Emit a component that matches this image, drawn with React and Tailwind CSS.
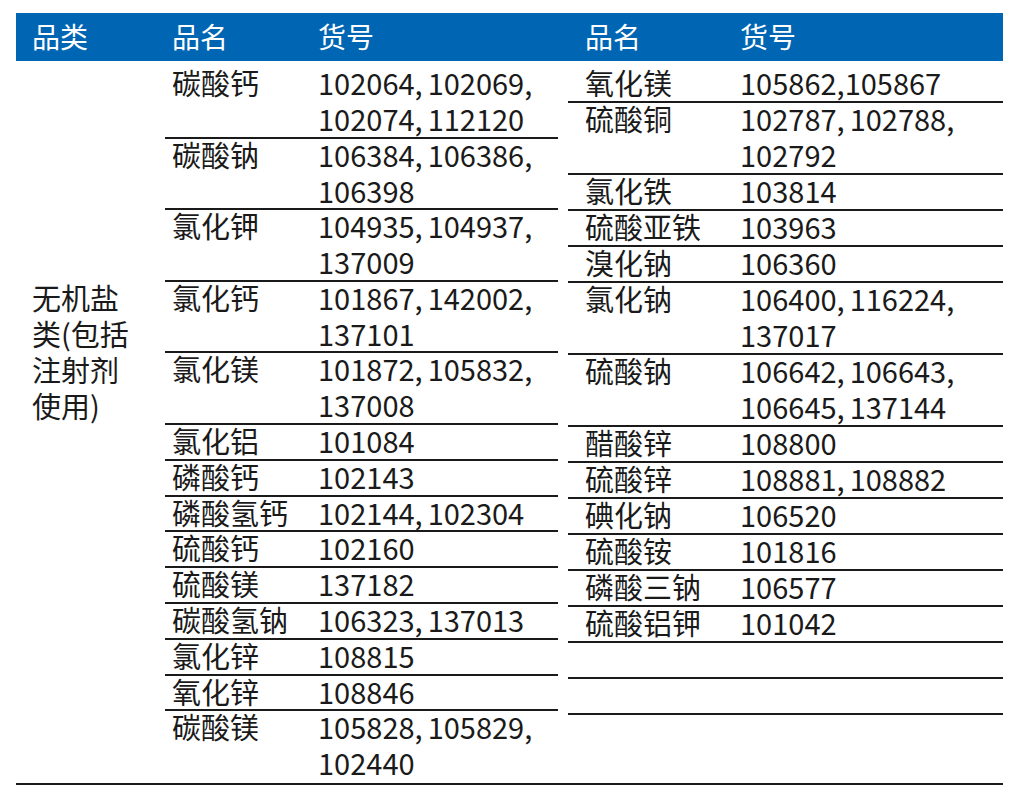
const left = [
  ['碳酸钙', ['102064,102069,', '102074,112120']],
  ['碳酸钠', ['106384,106386,', '106398']],
  ['氯化钾', ['104935,104937,', '137009']],
  ['氯化钙', ['101867,142002,', '137101']],
  ['氯化镁', ['101872,105832,', '137008']],
  ['氯化铝', ['101084']],
  ['磷酸钙', ['102143']],
  ['磷酸氢钙', ['102144,102304']],
  ['硫酸钙', ['102160']],
  ['硫酸镁', ['137182']],
  ['碳酸氢钠', ['106323,137013']],
  ['氯化锌', ['108815']],
  ['氧化锌', ['108846']],
  ['碳酸镁', ['105828,105829,', '102440']],
]

const right = [
  ['氧化镁', ['105862,105867'], true],
  ['硫酸铜', ['102787,102788,', '102792']],
  ['氯化铁', ['103814']],
  ['硫酸亚铁', ['103963']],
  ['溴化钠', ['106360']],
  ['氯化钠', ['106400,116224,', '137017']],
  ['硫酸钠', ['106642,106643,', '106645,137144']],
  ['醋酸锌', ['108800']],
  ['硫酸锌', ['108881,108882']],
  ['碘化钠', ['106520']],
  ['硫酸铵', ['101816']],
  ['磷酸三钠', ['106577']],
  ['硫酸铝钾', ['101042']],
  ['', []],
  ['', []],
]

// 逗号后留一点空隙，和原表一致
function Code({ text, narrow }) {
  if (narrow) return <div>{text}</div>
  const parts = text.split(',')
  const out = []
  parts.forEach((p, i) => {
    const comma = i < parts.length - 1
    out.push(
      <span key={i} className={`inline-block ${comma ? 'mr-[5px]' : ''}`}>
        {p + (comma ? ',' : '')}
      </span>
    )
  })
  return <div className="flex">{out}</div>
}

function Row({ name, codes, narrow, last, nameW }) {
  const tall = codes.length > 1
  return (
    <div
      className={`flex ${tall ? 'h-[72px]' : 'h-[36px]'} ${last ? '' : 'border-b-2 border-[#1a1a1a]'}`}
    >
      <div className={`${nameW} shrink-0 whitespace-nowrap`}>{name}</div>
      <div className="flex-1 flex flex-col gap-[6px] whitespace-nowrap">
        {codes.map((c, i) => <Code key={i} text={c} narrow={narrow} />)}
      </div>
    </div>
  )
}

export default function App() {
  return (
    <div
      className="min-h-screen bg-white text-[#1a1a1a] pt-[13px]"
      style={{ fontFamily: '"Noto Sans CJK SC", "Noto Sans", sans-serif' }}
    >
      <div className="ml-[16px] w-[987px]">
        {/* 表头 */}
        <div className="flex h-[48px] items-center pb-[2px] bg-[#0066b3] text-white text-[28px] leading-[36px]">
          <div className="w-[149px] pl-[16px]">品类</div>
          <div className="w-[153px] pl-[7px]">品名</div>
          <div className="w-[250px]">货号</div>
          <div className="w-[172px] pl-[17px]">品名</div>
          <div className="flex-1">货号</div>
        </div>

        {/* 表体 */}
        <div className="flex h-[724px] pt-[6px] border-b-2 border-[#1a1a1a] text-[29px] leading-[30px]">
          <div className="w-[149px] pl-[16px] pt-[215px] flex flex-col gap-[6px]">
            <div>无机盐</div>
            <div>类(包括</div>
            <div>注射剂</div>
            <div>使用)</div>
          </div>

          <div className="w-[393px] flex flex-col">
            {left.map(([n, c], i) => (
              <Row key={i} name={n} codes={c} last={i === left.length - 1} nameW="w-[153px] pl-[7px]" />
            ))}
          </div>

          <div className="w-[10px]" />

          <div className="w-[435px] flex flex-col">
            {right.map(([n, c, narrow], i) => (
              <Row key={i} name={n} codes={c} narrow={narrow} nameW="w-[172px] pl-[17px]" />
            ))}
          </div>
        </div>
      </div>
    </div>
  )
}
